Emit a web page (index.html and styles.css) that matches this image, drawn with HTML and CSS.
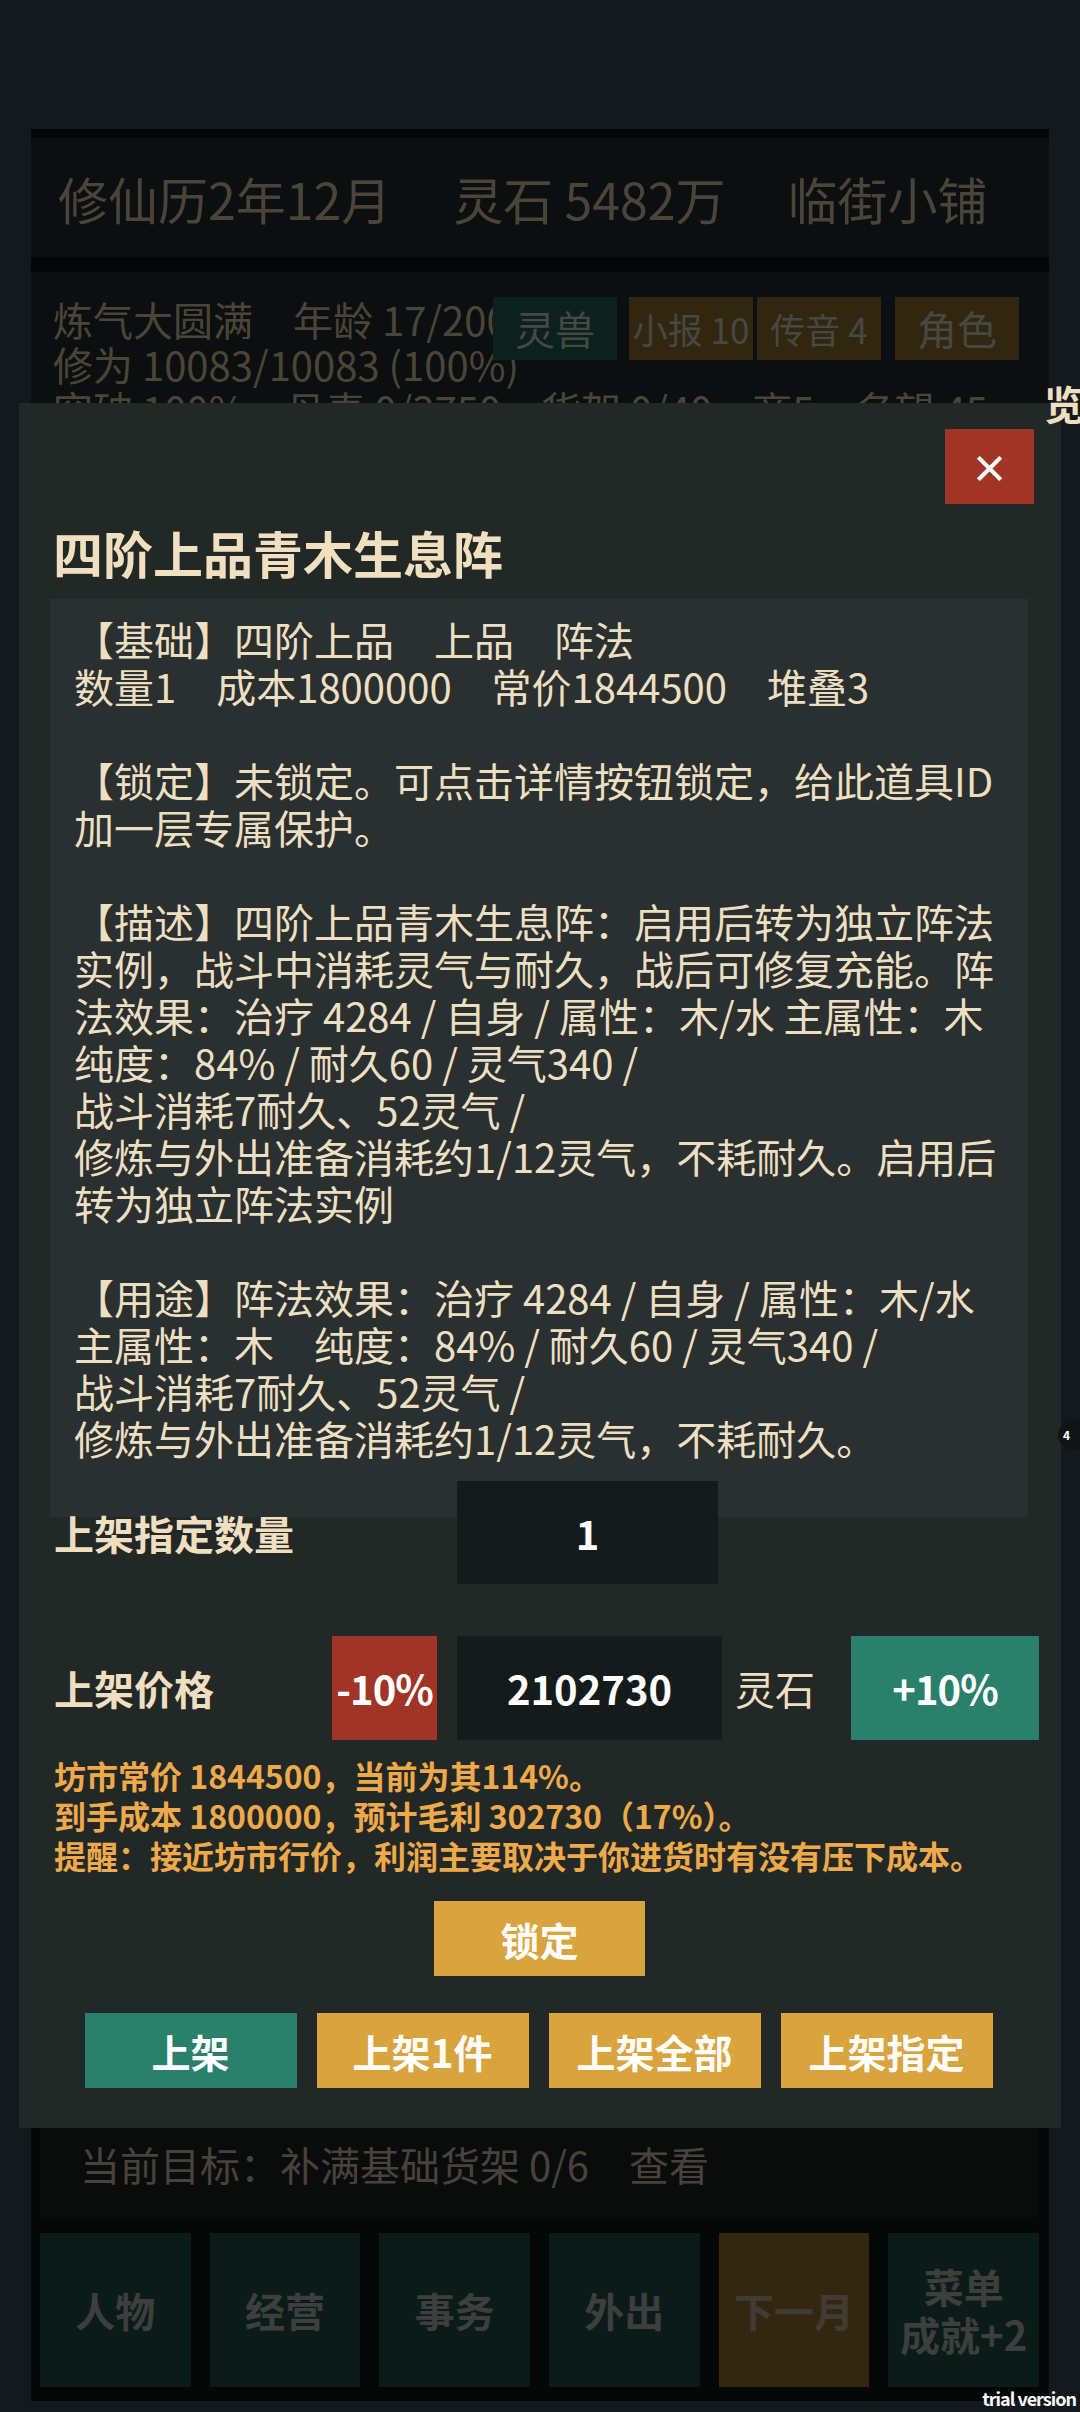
FILE: index.html
```html
<!DOCTYPE html>
<html>
<head>
    <meta charset="UTF-8">
    <title>临街小铺</title>
    <link rel="stylesheet" href="styles.css">
</head>

<body>
    <div class="game">
        <div class="topbar">
            <span>修仙历2年12月</span>
            <span>灵石 5482万</span>
            <span>临街小铺</span>
        </div>

        <div class="status">
            <div class="stat-lines">
                <div>炼气大圆满　年龄 17/200</div>
                <div>修为 10083/10083 (100%)</div>
                <div>突破 100%　丹毒 0/3750　货架 0/40　商5　名望 45</div>
            </div>
            <div class="quick">
                <span class="qbtn teal">灵兽</span>
                <span class="qbtn brown small">小报 10</span>
                <span class="qbtn brown small">传音 4</span>
                <span class="qbtn brown role">角色</span>
            </div>
        </div>

        <div class="bottom">
            <div class="goal">当前目标：补满基础货架 0/6　查看</div>
            <div class="nav">
                <span class="nbtn">人物</span>
                <span class="nbtn">经营</span>
                <span class="nbtn">事务</span>
                <span class="nbtn">外出</span>
                <span class="nbtn next">下一月</span>
                <span class="nbtn">菜单<br>成就+2</span>
            </div>
        </div>
    </div>

    <div class="side-tag">览</div>
    <div class="side-badge">4</div>

    <!-- 上架弹窗 -->
    <div class="modal">
        <div class="modal-head">
            <button class="close">×</button>
        </div>

        <h2 class="title">四阶上品青木生息阵</h2>

        <div class="desc">
            <p>【基础】四阶上品　上品　阵法<br>数量1　成本1800000　常价1844500　堆叠3</p>
            <p>【锁定】未锁定。可点击详情按钮锁定，给此道具ID<br>加一层专属保护。</p>
            <p>【描述】四阶上品青木生息阵：启用后转为独立阵法<br>实例，战斗中消耗灵气与耐久，战后可修复充能。阵<br>法效果：治疗 4284 / 自身 / 属性：木/水 主属性：木<br>纯度：84% / 耐久60 / 灵气340 /<br>战斗消耗7耐久、52灵气 /<br>修炼与外出准备消耗约1/12灵气，不耗耐久。启用后<br>转为独立阵法实例</p>
            <p>【用途】阵法效果：治疗 4284 / 自身 / 属性：木/水<br>主属性：木　纯度：84% / 耐久60 / 灵气340 /<br>战斗消耗7耐久、52灵气 /<br>修炼与外出准备消耗约1/12灵气，不耗耐久。</p>
        </div>

        <div class="row qty">
            <span class="label qty-label">上架指定数量</span>
            <span class="field qty-field">1</span>
        </div>

        <div class="row price">
            <span class="label price-label">上架价格</span>
            <button class="step minus">-10%</button>
            <span class="field price-field">2102730</span>
            <span class="unit">灵石</span>
            <button class="step plus">+10%</button>
        </div>

        <div class="notes">
            坊市常价 1844500，当前为其114%。<br>
            到手成本 1800000，预计毛利 302730（17%）。<br>
            提醒：接近坊市行价，利润主要取决于你进货时有没有压下成本。
        </div>

        <button class="btn gold lock">锁定</button>

        <div class="actions">
            <button class="btn teal-btn">上架</button>
            <button class="btn gold">上架1件</button>
            <button class="btn gold">上架全部</button>
            <button class="btn gold">上架指定</button>
        </div>
    </div>

    <div class="trial">trial version</div>
</body>
</html>
```

FILE: styles.css
```css
body {
    margin: 0;
    width: 1080px;
    height: 2412px;
    padding-top: 129px;
    box-sizing: border-box;
    overflow: hidden;
    position: relative;
    background: #13191c;
    font-family: "Noto Sans CJK SC", "Noto Sans", sans-serif;
}
button { font-family: inherit; border: none; padding: 0; cursor: pointer; }

/* 背景层（被弹窗压暗） */
.game { margin: 0 31px; background: #050607; }
.topbar {
    border-top: 9px solid #050607;
    height: 119px;
    background: #0b0f0f;
    display: flex;
    align-items: center;
    gap: 62px;
    padding-left: 27px;
    font-size: 50px;
    color: #4b4438;
}
.status {
    margin-top: 15px;
    height: 1856px;
    background: #0b0f0f;
    position: relative;
    padding: 25px 0 0 22px;
    box-sizing: border-box;
    font-size: 40px;
    line-height: 45px;
    color: #4b4538;
    white-space: nowrap;
}
.quick { position: absolute; left: 462px; top: 25px; display: flex; gap: 4px; }
.qbtn {
    width: 124px;
    height: 63px;
    display: flex;
    align-items: center;
    justify-content: center;
    font-size: 40px;
    color: #464846;
}
.qbtn.small { font-size: 35px; }
.teal { background: #0c201c; margin-right: 8px; }
.brown { background: #31270f; }
.role { margin-left: 10px; }

.bottom { height: 273px; background: #060707; padding: 0 10px 0 9px; box-sizing: border-box; }
.goal {
    height: 89px;
    background: #0a0b0b;
    padding: 11px 0 0 40px;
    box-sizing: border-box;
    font-size: 40px;
    line-height: 50px;
    color: #48433a;
}
.nav { margin-top: 16px; display: flex; gap: 19px; }
.nbtn {
    width: 151px;
    height: 154px;
    background: #0b1c18;
    display: flex;
    align-items: center;
    justify-content: center;
    text-align: center;
    font-size: 40px;
    line-height: 48px;
    font-weight: bold;
    color: #3d3f3c;
}
.nbtn.next { background: #33280f; color: #3f3c34; }

.side-tag {
    position: absolute;
    left: 1044px;
    top: 374px;
    z-index: 3;
    font-size: 40px;
    font-weight: bold;
    color: #efdfc0;
}
.side-badge {
    position: absolute;
    left: 1058px;
    top: 1420px;
    z-index: 3;
    width: 30px;
    height: 30px;
    border-radius: 50%;
    background: #101414;
    color: #fff;
    font-size: 12px;
    font-weight: bold;
    line-height: 30px;
    padding-left: 5px;
    box-sizing: border-box;
}

/* 弹窗 */
.modal {
    position: absolute;
    left: 19px;
    top: 403px;
    width: 1042px;
    height: 1725px;
    z-index: 2;
    background: #222826;
    padding: 26px 27px 0 31px;
    box-sizing: border-box;
    display: flex;
    flex-direction: column;
    color: #ecdfc2;
}
.modal-head { display: flex; justify-content: flex-end; }
.close {
    width: 89px;
    height: 75px;
    background: #a03426;
    color: #fff;
    font-size: 38px;
    font-weight: bold;
}
.title {
    margin: 18px 0 0;
    padding-left: 3px;
    font-size: 50px;
    line-height: 60px;
    font-weight: bold;
    color: #f0e0c0;
}
.desc {
    margin-top: 17px;
    width: 978px;
    height: 918px;
    background: #2a2f2f;
    padding: 17px 24px 0;
    box-sizing: border-box;
    overflow: hidden;
    font-size: 40px;
    line-height: 47px;
    white-space: nowrap;
}
.desc p { margin: 0 0 47px; }

.row {
    display: flex;
    align-items: center;
    padding-left: 4px;
    position: relative;
}
.row > * { flex-shrink: 0; }
.label { font-size: 40px; font-weight: bold; color: #efdfc0; }
.field {
    background: #151a1a;
    color: #fff;
    font-size: 40px;
    font-weight: bold;
    display: flex;
    align-items: center;
    justify-content: center;
}
.qty { height: 103px; margin-top: -36px; }
.qty-label { width: 403px; }
.qty-field { width: 261px; height: 103px; }

.price { height: 104px; margin-top: 52px; }
.price-label { width: 278px; }
.step { height: 104px; color: #fff; font-size: 40px; font-weight: bold; letter-spacing: -1px; }
.minus { width: 105px; background: #a03426; margin-right: 20px; }
.plus { width: 188px; background: #2a806b; }
.price-field { width: 265px; height: 104px; }
.unit { width: 129px; padding-left: 13px; box-sizing: border-box; font-size: 40px; color: #efdfc0; }

.notes {
    margin-top: 15px;
    padding-left: 4px;
    font-size: 32px;
    line-height: 40px;
    font-weight: bold;
    color: #eea94b;
    white-space: nowrap;
}

.btn {
    width: 212px;
    height: 75px;
    color: #fff;
    font-size: 39px;
    font-weight: bold;
}
.gold { background: #d9a33e; }
.teal-btn { background: #2a806b; }
.lock { width: 211px; margin-top: 26px; align-self: center; margin-right: 5px; }
.actions { margin-top: 37px; display: flex; justify-content: center; gap: 20px; margin-right: 7px; }

.trial {
    position: absolute;
    right: 4px;
    bottom: 1px;
    z-index: 3;
    font-size: 18px;
    font-weight: bold;
    letter-spacing: -1px;
    color: #fff;
}
```
